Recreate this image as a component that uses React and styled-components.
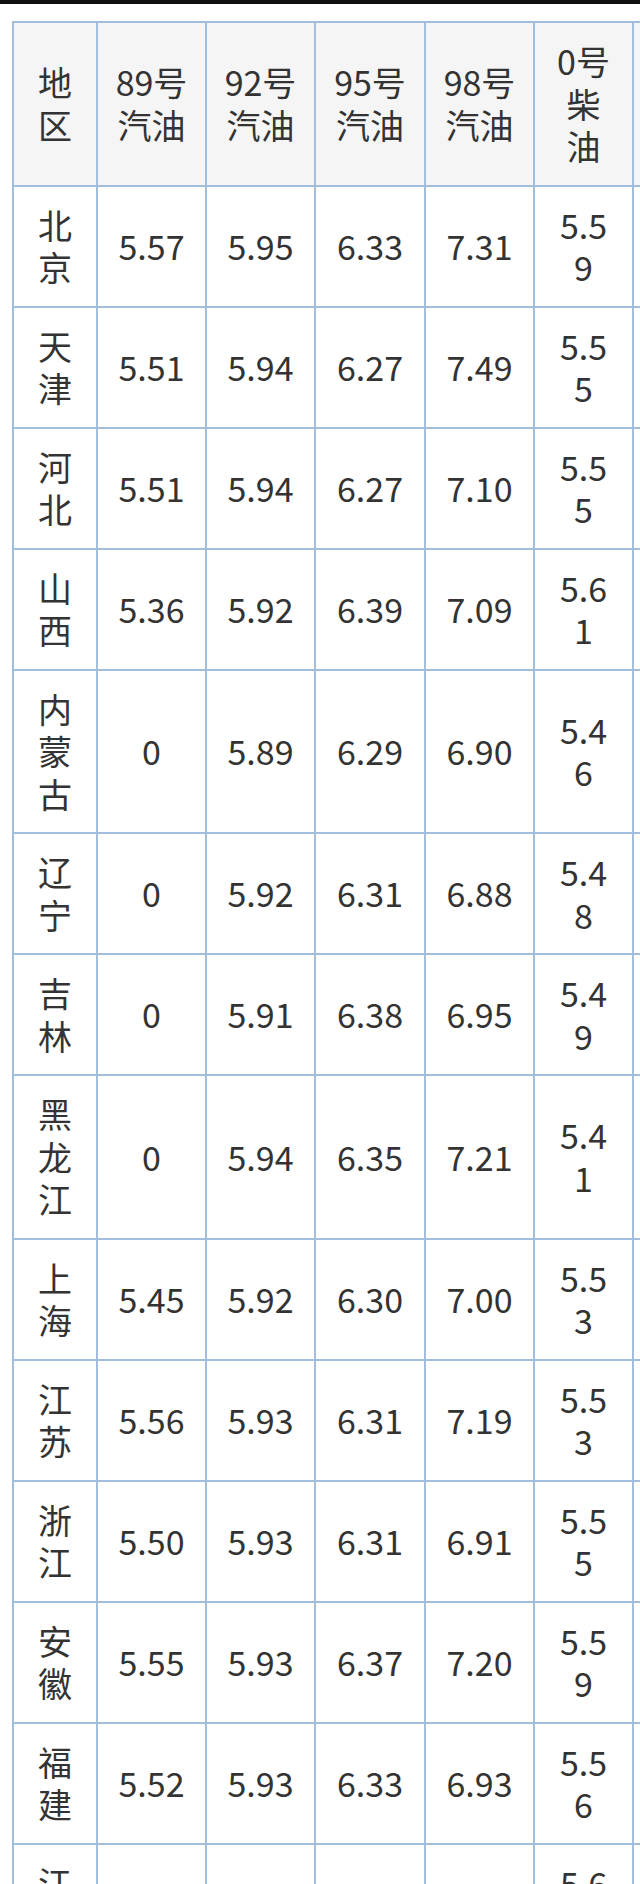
import React from "react"
import styled, { createGlobalStyle } from "styled-components"

const GlobalStyle = createGlobalStyle`
	html, body {
		margin: 0;
		padding: 0;
		background: #ffffff;
		overflow-x: hidden;
	}
	body {
		font-family: "Noto Sans CJK SC", "Noto Sans", sans-serif;
		color: #333333;
	}
`

const TopBar = styled.div`
	height: 4px;
	background: #111111;
`

const Page = styled.div`
	padding: 17px 0 0 12px;
`

const Table = styled.table`
	border-collapse: collapse;
	table-layout: fixed;
	width: 730px;
	font-size: 34px;
	line-height: 1.25;
`

const HeadCell = styled.th`
	background: #f5f5f5;
	font-weight: 400;
	border: 2px solid #a2bedd;
	padding: 17px ${(p) => (p.$tight ? "20px" : "16px")};
	text-align: center;
	vertical-align: middle;
	word-break: break-all;
`

const Cell = styled.td`
	background: #ffffff;
	border: 2px solid #a2bedd;
	padding: 17px ${(p) => (p.$tight ? "20px" : "16px")};
	text-align: center;
	vertical-align: middle;
	word-break: break-all;
`

const columns = [
	{ label: "地区", width: 84 },
	{ label: "89号汽油", width: 109 },
	{ label: "92号汽油", width: 109 },
	{ label: "95号汽油", width: 110 },
	{ label: "98号汽油", width: 109 },
	{ label: "0号柴油", width: 99, tight: true },
	{ label: "", width: 110 },
]

const rows = [
	["北京", "5.57", "5.95", "6.33", "7.31", "5.59"],
	["天津", "5.51", "5.94", "6.27", "7.49", "5.55"],
	["河北", "5.51", "5.94", "6.27", "7.10", "5.55"],
	["山西", "5.36", "5.92", "6.39", "7.09", "5.61"],
	["内蒙古", "0", "5.89", "6.29", "6.90", "5.46"],
	["辽宁", "0", "5.92", "6.31", "6.88", "5.48"],
	["吉林", "0", "5.91", "6.38", "6.95", "5.49"],
	["黑龙江", "0", "5.94", "6.35", "7.21", "5.41"],
	["上海", "5.45", "5.92", "6.30", "7.00", "5.53"],
	["江苏", "5.56", "5.93", "6.31", "7.19", "5.53"],
	["浙江", "5.50", "5.93", "6.31", "6.91", "5.55"],
	["安徽", "5.55", "5.93", "6.37", "7.20", "5.59"],
	["福建", "5.52", "5.93", "6.33", "6.93", "5.56"],
	["江西", "5.52", "5.92", "6.42", "7.42", "5.62"],
]

const App = () => {
	return (
		<>
			<GlobalStyle />
			<TopBar />
			<Page>
				<Table>
					<colgroup>
						{columns.map((c, i) => (
							<col key={i} style={{ width: c.width }} />
						))}
					</colgroup>
					<thead>
						<tr>
							{columns.map((c, i) => (
								<HeadCell key={i} $tight={c.tight}>
									{c.label}
								</HeadCell>
							))}
						</tr>
					</thead>
					<tbody>
						{rows.map((r) => (
							<tr key={r[0]}>
								{r.map((v, i) => (
									<Cell key={i} $tight={columns[i].tight}>
										{v}
									</Cell>
								))}
								<Cell />
							</tr>
						))}
					</tbody>
				</Table>
			</Page>
		</>
	)
}

export default App
